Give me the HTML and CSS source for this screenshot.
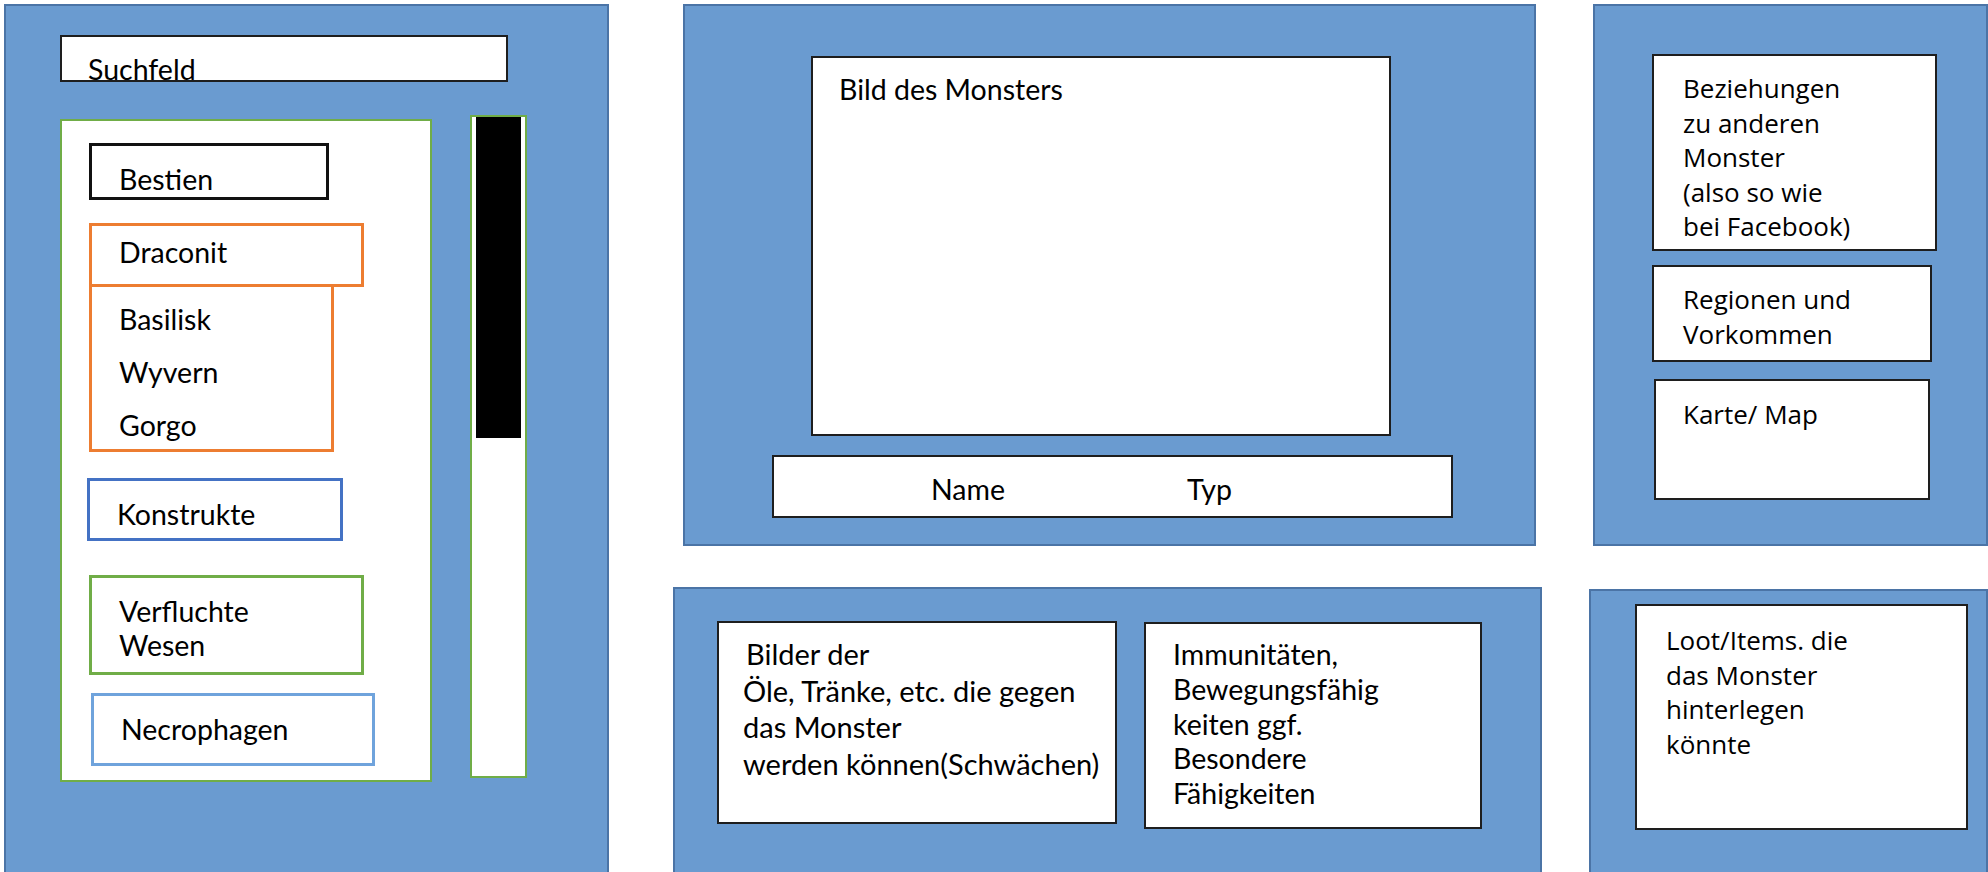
FILE: index.html
```html
<!DOCTYPE html>
<html lang="de">
<head>
<meta charset="utf-8">
<title>Monster-Bestiarium Wireframe</title>
<link rel="stylesheet" href="styles.css">
</head>
<body>
<div class="page">
  <section class="panel panel-left">
    <div class="search">Suchfeld</div>
    <div class="list-row">
      <div class="list">
        <div class="cat cat-bestien">Bestien</div>
        <div class="cat cat-draconit">Draconit</div>
        <div class="sub">
          <div>Basilisk</div>
          <div>Wyvern</div>
          <div>Gorgo</div>
        </div>
        <div class="cat cat-konstrukte">Konstrukte</div>
        <div class="cat cat-verflucht">Verfluchte<br>Wesen</div>
        <div class="cat cat-necro">Necrophagen</div>
      </div>
      <div class="scrollbar"><div class="thumb"></div></div>
    </div>
  </section>

  <div class="col col-mid">
    <section class="panel panel-mid-top">
      <div class="picture">Bild des Monsters</div>
      <div class="namebar"><span class="name">Name</span><span class="type">Typ</span></div>
    </section>
    <section class="panel panel-mid-bottom">
      <div class="box box-weak">
        <div class="indent">Bilder der</div>
        <div>Öle, Tränke, etc. die gegen</div>
        <div>das Monster</div>
        <div>werden können(Schwächen)</div>
      </div>
      <div class="box box-immun">
        <div>Immunitäten,</div>
        <div>Bewegungsfähig</div>
        <div>keiten ggf.</div>
        <div>Besondere</div>
        <div>Fähigkeiten</div>
      </div>
    </section>
  </div>

  <div class="col col-right">
    <section class="panel panel-right-top">
      <div class="box box-rel">
        <div>Beziehungen</div>
        <div>zu anderen</div>
        <div>Monster</div>
        <div>(also so wie</div>
        <div>bei Facebook)</div>
      </div>
      <div class="box box-reg">
        <div>Regionen und</div>
        <div>Vorkommen</div>
      </div>
      <div class="box box-map">Karte/ Map</div>
    </section>
    <section class="panel panel-right-bottom">
      <div class="box box-loot">
        <div>Loot/Items. die</div>
        <div>das Monster</div>
        <div>hinterlegen</div>
        <div>könnte</div>
      </div>
    </section>
  </div>
</div>
</body>
</html>
```

FILE: styles.css
```css
* { box-sizing: border-box; }

html, body {
  margin: 0;
  padding: 0;
  background: #ffffff;
  overflow: hidden;
}

.page {
  width: 1988px;
  height: 872px;
  overflow: hidden;
  display: flex;
  align-items: flex-start;
  padding: 4px 0 0 4px;
  font-family: "Lato", "Liberation Sans", sans-serif;
  font-size: 28.5px;
  line-height: 34px;
  color: #000;
}

.panel {
  background: #6a9bd0;
  border: 2px solid #4b74a6;
  display: flex;
  flex-direction: column;
  align-items: flex-start;
  flex-shrink: 0;
}

.col {
  display: flex;
  flex-direction: column;
  align-items: flex-start;
  flex-shrink: 0;
}

/* ---------- left panel ---------- */
.panel-left {
  width: 605px;
  height: 920px;
}

.search {
  margin: 29px 0 0 54px;
  width: 448px;
  height: 47px;
  background: #fff;
  border: 2px solid #1e1e1e;
  padding: 22px 0 0 26px;
  line-height: 20px;
}

.list-row {
  display: flex;
  align-items: flex-start;
  margin: 33px 0 0 54px;
}

.list {
  margin-top: 4px;
  width: 372px;
  height: 663px;
  background: #fff;
  border: 2px solid #70ad47;
  display: flex;
  flex-direction: column;
  align-items: flex-start;
}

.cat {
  background: #fff;
  border: 3px solid #000;
  padding: 16px 0 0 27px;
}

.cat-bestien {
  margin: 22px 0 0 27px;
  width: 240px;
  height: 57px;
  border-color: #111;
}

.cat-draconit {
  margin: 23px 0 0 27px;
  width: 275px;
  height: 64px;
  border-color: #ed7d31;
  padding-top: 9px;
}

.sub {
  margin: 0 0 0 27px;
  width: 245px;
  height: 165px;
  border: 3px solid #ed7d31;
  border-top: none;
  padding: 6px 0 0 27px;
  line-height: 53px;
}

.cat-konstrukte {
  margin: 26px 0 0 25px;
  width: 256px;
  height: 63px;
  border-color: #4472c4;
}

.cat-verflucht {
  margin: 34px 0 0 27px;
  width: 275px;
  height: 100px;
  border-color: #70ad47;
}

.cat-necro {
  margin: 18px 0 0 29px;
  width: 284px;
  height: 73px;
  border-color: #6fa3dc;
}

.scrollbar {
  margin-left: 38px;
  width: 57px;
  height: 663px;
  background: #fff;
  border: 2px solid #70ad47;
  padding: 0 4px;
}

.thumb {
  width: 100%;
  height: 321px;
  background: #000;
}

/* ---------- middle column ---------- */
.col-mid {
  margin-left: 64px;
  width: 869px;
}

.panel-mid-top {
  margin-left: 10px;
  width: 853px;
  height: 542px;
}

.picture {
  margin: 50px 0 0 126px;
  width: 580px;
  height: 380px;
  background: #fff;
  border: 2px solid #1e1e1e;
  padding: 14px 0 0 26px;
}

.namebar {
  margin: 19px 0 0 87px;
  width: 681px;
  height: 63px;
  background: #fff;
  border: 2px solid #1e1e1e;
  padding: 15px 0 0 157px;
  display: flex;
}

.namebar .name {
  width: 256px;
}

.panel-mid-bottom {
  margin-top: 41px;
  width: 869px;
  height: 320px;
  flex-direction: row;
}

.box {
  background: #fff;
  border: 2px solid #1e1e1e;
  flex-shrink: 0;
}

.box-weak {
  margin: 32px 0 0 42px;
  width: 400px;
  height: 203px;
  padding: 13px 0 0 24px;
  font-size: 29px;
  line-height: 36.7px;
}

.box-weak .indent {
  padding-left: 3px;
}

.box-immun {
  margin: 33px 0 0 27px;
  width: 338px;
  height: 207px;
  padding: 13px 0 0 27px;
  font-size: 28.5px;
  line-height: 34.75px;
}

/* ---------- right column ---------- */
.col-right {
  margin-left: 47px;
  width: 399px;
  font-family: "Open Sans", "Liberation Sans", sans-serif;
  font-size: 26px;
  line-height: 34.5px;
}

.panel-right-top {
  margin-left: 4px;
  width: 395px;
  height: 542px;
}

.box-rel {
  margin: 48px 0 0 57px;
  width: 285px;
  height: 197px;
  padding: 15px 0 0 29px;
}

.box-reg {
  margin: 14px 0 0 57px;
  width: 280px;
  height: 97px;
  padding: 15px 0 0 29px;
}

.box-map {
  margin: 17px 0 0 59px;
  width: 276px;
  height: 121px;
  padding: 16px 0 0 27px;
}

.panel-right-bottom {
  margin-top: 43px;
  width: 399px;
  height: 320px;
}

.box-loot {
  margin: 13px 0 0 44px;
  width: 333px;
  height: 226px;
  padding: 17px 0 0 29px;
}
```
